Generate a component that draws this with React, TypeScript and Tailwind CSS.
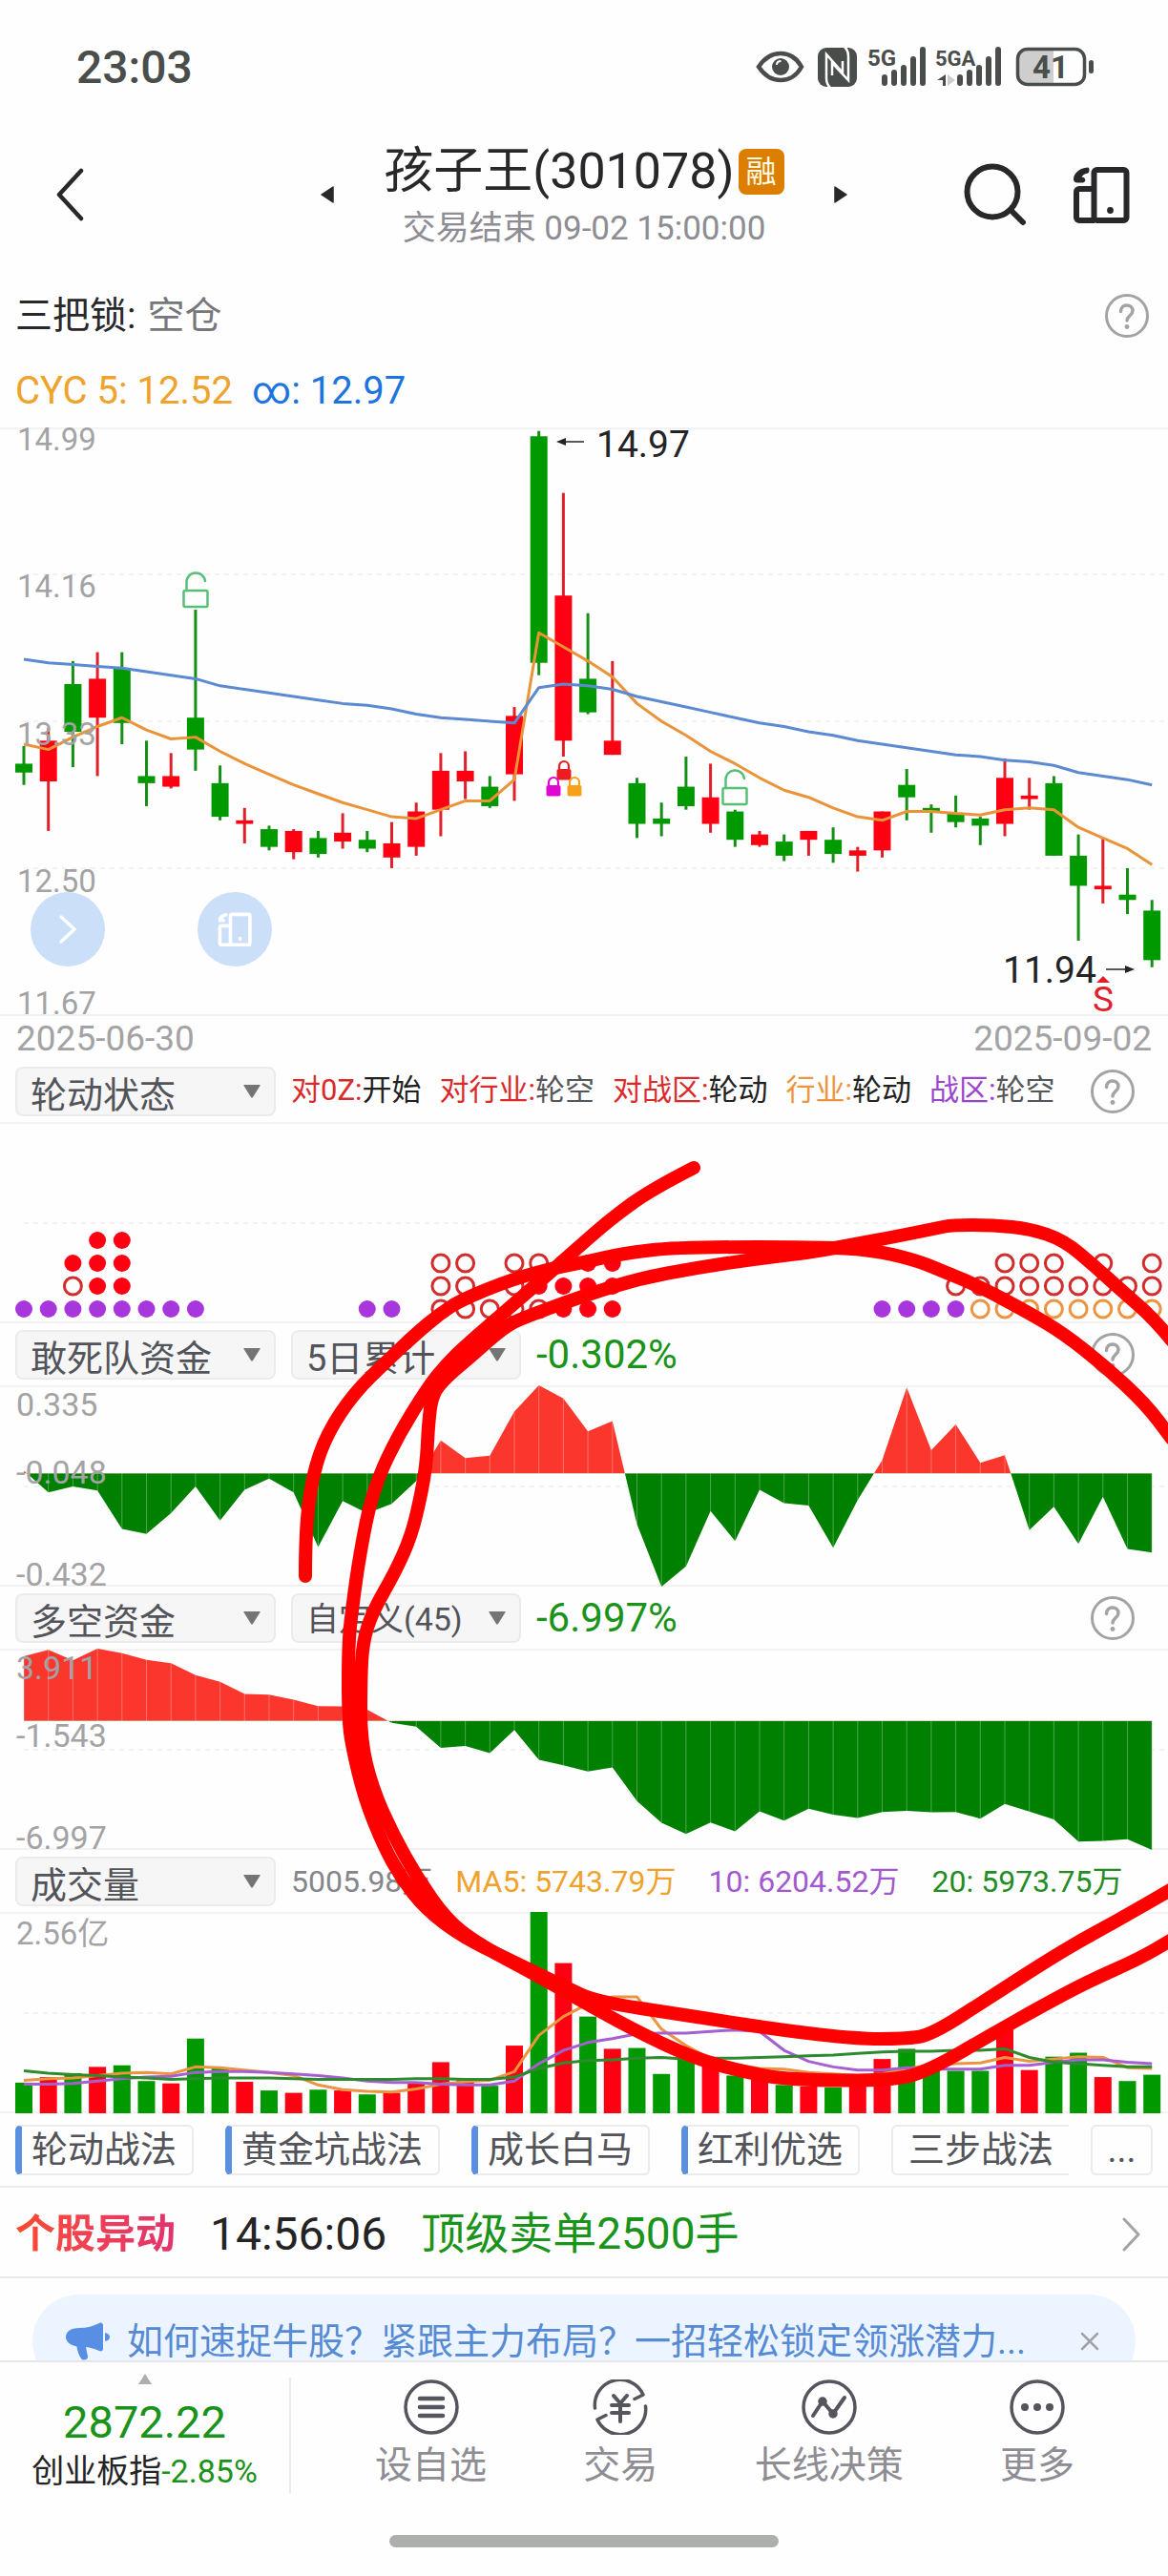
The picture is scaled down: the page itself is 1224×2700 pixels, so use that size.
import type { ReactNode } from "react";

type Point = [number, number];
type Candle = ["up" | "down", number, number, number, number];

const UP = "#ff0012";
const DOWN = "#009a00";
const WIDTH = 1224;
const PANEL_HEIGHT = 211;

// [direction, high, body top, body bottom, low]
const candles: Candle[] = [
  ["down", 13.19, 13.09, 13.04, 12.97],
  ["up", 13.29, 13.22, 12.99, 12.71],
  ["down", 13.67, 13.54, 13.27, 13.07],
  ["up", 13.72, 13.57, 13.35, 13.02],
  ["down", 13.72, 13.63, 13.32, 13.2],
  ["down", 13.22, 13.02, 12.98, 12.85],
  ["up", 13.15, 13.02, 12.96, 12.95],
  ["down", 13.96, 13.35, 13.17, 13.05],
  ["down", 13.08, 12.98, 12.79, 12.77],
  ["up", 12.84, 12.77, 12.75, 12.64],
  ["down", 12.74, 12.72, 12.62, 12.6],
  ["up", 12.72, 12.71, 12.59, 12.55],
  ["down", 12.71, 12.67, 12.58, 12.56],
  ["up", 12.81, 12.7, 12.65, 12.61],
  ["down", 12.71, 12.66, 12.61, 12.59],
  ["up", 12.76, 12.64, 12.56, 12.5],
  ["up", 12.87, 12.82, 12.62, 12.57],
  ["up", 13.15, 13.05, 12.83, 12.68],
  ["up", 13.16, 13.05, 12.99, 12.89],
  ["down", 13.02, 12.96, 12.85, 12.84],
  ["up", 13.41, 13.36, 13.03, 12.88],
  ["down", 14.97, 14.94, 13.66, 13.59],
  ["up", 14.62, 14.04, 13.22, 13.13],
  ["down", 13.94, 13.57, 13.38, 13.37],
  ["up", 13.67, 13.22, 13.14, 13.14],
  ["down", 13.01, 12.98, 12.75, 12.67],
  ["down", 12.87, 12.78, 12.75, 12.68],
  ["down", 13.13, 12.96, 12.85, 12.83],
  ["up", 13.09, 12.9, 12.75, 12.7],
  ["down", 12.83, 12.82, 12.66, 12.62],
  ["up", 12.71, 12.69, 12.63, 12.62],
  ["down", 12.69, 12.65, 12.57, 12.54],
  ["up", 12.71, 12.71, 12.66, 12.57],
  ["down", 12.73, 12.66, 12.58, 12.53],
  ["up", 12.62, 12.6, 12.57, 12.48],
  ["up", 12.82, 12.82, 12.6, 12.56],
  ["down", 13.06, 12.97, 12.9, 12.77],
  ["down", 12.86, 12.84, 12.82, 12.7],
  ["down", 12.91, 12.81, 12.76, 12.73],
  ["down", 12.79, 12.78, 12.74, 12.63],
  ["up", 13.12, 13.01, 12.75, 12.68],
  ["up", 13.01, 12.91, 12.89, 12.83],
  ["down", 13.02, 12.98, 12.57, 12.57],
  ["down", 12.69, 12.57, 12.4, 12.09],
  ["up", 12.67, 12.4, 12.38, 12.3],
  ["down", 12.5, 12.35, 12.32, 12.24],
  ["down", 12.32, 12.26, 11.98, 11.94],
];

const cyc5 = [
  13.2, 13.17, 13.24, 13.3, 13.35, 13.28, 13.23, 13.24, 13.16, 13.09, 13.03, 12.97, 12.92, 12.87, 12.83, 12.79,
  12.78, 12.83, 12.88, 12.88, 13, 13.83, 13.75, 13.67, 13.58, 13.43, 13.33, 13.25, 13.16, 13.09, 13.01, 12.94,
  12.9, 12.84, 12.79, 12.77, 12.82, 12.82, 12.81, 12.8, 12.83, 12.84, 12.83, 12.73, 12.67, 12.61, 12.52,
];

const cycAll = [
  13.68, 13.66, 13.65, 13.64, 13.63, 13.61, 13.59, 13.57, 13.53, 13.51, 13.49, 13.47, 13.45, 13.43, 13.42, 13.4,
  13.37, 13.35, 13.34, 13.33, 13.32, 13.52, 13.54, 13.53, 13.51, 13.47, 13.44, 13.41, 13.38, 13.35, 13.32, 13.3,
  13.27, 13.25, 13.22, 13.2, 13.18, 13.16, 13.14, 13.13, 13.11, 13.1, 13.08, 13.04, 13.02, 13, 12.97,
];

const suicideSquad = [
  0.01, -0.073, -0.05, -0.066, -0.212, -0.231, -0.152, -0.05, -0.18, -0.063, -0.02, -0.073, -0.281, -0.106, -0.152,
  -0.117, -0.029, 0.125, 0.058, 0.067, 0.235, 0.335, 0.285, 0.16, 0.199, -0.194, -0.432, -0.355, -0.144, -0.258,
  -0.063, -0.114, -0.123, -0.284, -0.102, 0.05, 0.327, 0.088, 0.186, 0.04, 0.069, -0.217, -0.128, -0.269, -0.089,
  -0.288, -0.302,
];

const longShort = [
  3.5, 3.85, 3.28, 3.91, 3.67, 3.3, 3.12, 2.47, 2.11, 1.46, 1.42, 1.14, 0.8, 0.78, 0.6, -0.11, -0.31, -1.47, -1.36,
  -1.75, -0.5, -2.11, -2.41, -2.74, -2.52, -4.35, -5.53, -6.13, -5.51, -5.99, -4.9, -5.41, -4.76, -5.08, -5.26,
  -4.94, -4.88, -4.96, -4.94, -5.3, -4.5, -4.92, -5.34, -6.54, -6.5, -6.42, -6.997,
];

const volumes = [
  39, 46, 51, 59, 61, 41, 38, 95, 57, 40, 29, 26, 30, 29, 24, 26, 39, 65, 42, 35, 86, 256, 191, 123, 82, 83, 50, 68,
  62, 48, 46, 36, 34, 33, 36, 69, 82, 55, 54, 54, 109, 55, 72, 77, 46, 41, 49,
];

const ma5 = [
  42, 44, 45, 48, 51, 52, 50, 59, 58, 55, 52, 48, 36, 30, 28, 27, 31, 37, 40, 42, 53, 99, 123, 139, 148, 148, 107,
  86, 69, 62, 57, 56, 52, 50, 48, 50, 57, 61, 63, 64, 71, 66, 69, 72, 71, 58, 57,
];

const ma10 = [
  37, 37, 38, 41, 44, 46, 47, 52, 53, 53, 52, 50, 48, 45, 41, 39, 39, 37, 36, 36, 41, 63, 80, 90, 95, 101, 102, 102,
  104, 106, 104, 80, 66, 59, 55, 55, 58, 56, 56, 56, 61, 61, 65, 68, 68, 65, 63,
];

const ma20 = [
  54, 51, 49, 48, 46, 45, 43, 44, 45, 45, 45, 44, 43, 43, 43, 43, 44, 44, 43, 43, 46, 57, 64, 67, 68, 70, 71, 69, 70,
  70, 71, 72, 73, 74, 76, 78, 79, 79, 80, 80, 82, 71, 65, 63, 61, 59, 59,
];

const dotRows = [
  { y: 124, color: UP, solid: true, days: [3, 4] },
  { y: 148, color: UP, solid: true, days: [2, 3, 4, 22, 23, 24] },
  { y: 148, color: "#d32c2c", solid: false, days: [17, 18, 20, 21, 40, 41, 42, 44, 46] },
  { y: 172, color: UP, solid: true, days: [3, 4, 21, 22, 23, 24] },
  { y: 172, color: "#d32c2c", solid: false, days: [2, 17, 18, 20, 38, 39, 40, 41, 42, 43, 44, 45, 46] },
  { y: 196, color: "#a737dc", solid: true, days: [0, 1, 2, 3, 4, 5, 6, 7, 14, 15, 35, 36, 37, 38] },
  { y: 196, color: UP, solid: true, days: [22, 23, 24] },
  { y: 196, color: "#d32c2c", solid: false, days: [17, 18, 19, 20, 21] },
  { y: 196, color: "#ec9440", solid: false, days: [39, 40, 41, 42, 43, 44, 45, 46] },
];

const strokes: Point[][] = [
  [
    [727, 1224], [682, 1247], [641, 1277], [612, 1302], [566, 1343], [488, 1410], [468, 1430], [449, 1453],
    [414, 1510], [390, 1564], [377, 1629], [369, 1686], [365, 1724], [365, 1801], [369, 1831], [382, 1885],
    [402, 1935], [421, 1969], [445, 2000], [484, 2030], [546, 2060], [593, 2083], [625, 2098], [718, 2112],
    [749, 2117], [820, 2128], [898, 2137], [948, 2137], [976, 2133], [1038, 2093], [1116, 2043], [1171, 2013],
    [1228, 1980],
  ],
  [
    [320, 1652], [320, 1602], [328, 1544], [343, 1502], [371, 1460], [406, 1426], [437, 1397], [461, 1377],
    [484, 1362], [539, 1340], [585, 1328], [612, 1323], [651, 1314], [710, 1307], [877, 1307], [924, 1312],
    [963, 1322], [987, 1332], [1026, 1348], [1080, 1377], [1115, 1398], [1158, 1432], [1201, 1472], [1228, 1508],
  ],
  [
    [1228, 1405], [1209, 1382], [1178, 1355], [1147, 1327], [1115, 1300], [1080, 1288], [1041, 1284], [998, 1284],
    [983, 1287], [944, 1295], [881, 1307], [846, 1313], [788, 1320], [729, 1329], [670, 1340], [612, 1358],
    [546, 1382], [527, 1392], [492, 1423], [468, 1443], [453, 1461], [449, 1491], [447, 1533], [441, 1568],
    [431, 1610], [414, 1648], [390, 1690], [380, 1722], [378, 1763], [378, 1824], [390, 1874], [412, 1923],
    [437, 1968], [468, 2012], [500, 2037], [562, 2070], [609, 2097], [663, 2127], [726, 2157], [781, 2172],
    [827, 2180], [937, 2181], [976, 2169], [1038, 2133], [1093, 2102], [1140, 2077], [1194, 2053], [1228, 2033],
  ],
];

const strategies = ["轮动战法", "黄金坑战法", "成长白马", "红利优选"];

const dayX = (i: number) => 25 + i * 25.7;
const priceY = (price: number) => (14.99 - price) * 185.5;
const volumeY = (volume: number) => PANEL_HEIGHT - (volume / 256) * PANEL_HEIGHT;

const toLine = (values: number[], scale: (v: number) => number) =>
  values.map((v, i) => `${dayX(i)},${scale(v)}`).join(" ");

const toCurve = (points: Point[]) => {
  let d = `M${points[0][0]} ${points[0][1]}`;
  for (let i = 1; i < points.length - 1; i++) {
    const [x, y] = points[i];
    const [nx, ny] = points[i + 1];
    d += ` Q${x} ${y} ${(x + nx) / 2} ${(y + ny) / 2}`;
  }
  const last = points[points.length - 1];
  return `${d} L${last[0]} ${last[1]}`;
};

const HelpButton = () => (
  <button type="button" aria-label="说明" className="shrink-0 text-[#a3a3a6]">
    <svg viewBox="0 0 46 46" className="size-[46px]" fill="none" stroke="currentColor" strokeLinecap="round">
      <circle cx="23" cy="23" r="21.5" strokeWidth="3" />
      <path d="M16.5 18.5c0-4 2.800-6.500 6.300-6.500s6.200 2.400 6.200 5.800c0 4.700-6 5.200-6 10.200" strokeWidth="3.500" />
      <circle cx="23" cy="34.500" r="2.400" fill="currentColor" stroke="none" />
    </svg>
  </button>
);

const DevicesIcon = ({ className }: { className: string }) => (
  <svg viewBox="0 0 60 60" className={className} fill="none" stroke="currentColor" strokeWidth="6" strokeLinejoin="round">
    <rect x="22.500" y="4" width="34" height="53" rx="3" />
    <path d="M22 24H7a3 3 0 0 0-3 3v27a3 3 0 0 0 3 3h16" />
    <circle cx="39.500" cy="46.500" r="3.400" fill="currentColor" stroke="none" />
    <path
      d="M16 1.500C7 2 1 8 1 14c0 2 1.500 3.500 4 3.500h5c2.500 0 4-2 3-4-.5-1.200-1.800-1.800-3.500-2 1-2 3-3.200 6-3.800 1.500-.4 2-2 2-3.500s-.5-2.700-1.500-2.700z"
      fill="currentColor"
      stroke="none"
    />
  </svg>
);

const OpenLock = ({ x, y }: { x: number; y: number }) => (
  <g transform={`translate(${x} ${y})`} fill="none" stroke="#58bf78" strokeWidth="2.500" strokeLinecap="round">
    <rect x="-12.500" y="19" width="25" height="17" rx="1.500" />
    <path d="M-9.500 19v-7.500a9.800 9.800 0 0 1 19.500-2.500" />
  </g>
);

const ClosedLock = ({ x, y, color }: { x: number; y: number; color: string }) => (
  <g transform={`translate(${x} ${y})`}>
    <path d="M-5 9V6a5 5 0 0 1 10 0v3" fill="none" stroke={color} strokeWidth="2.200" />
    <rect x="-7.500" y="9" width="15" height="11.500" rx="2" fill={color} />
  </g>
);

const StatusBar = () => (
  <div className="flex h-[142px] items-center justify-between pr-[76px] pl-20 text-[#4a4e4b]">
    <span className="text-[48px] font-medium">23:03</span>
    <svg viewBox="0 0 356 44" className="h-11 w-[356px] overflow-visible" fill="none" aria-hidden="true">
      <path d="M3 21C9 12 17 7 26 7s17 5 22 14c-5 9-13 14-22 14S9 30 3 21z" stroke="#4a4e4b" strokeWidth="4.500" />
      <circle cx="26" cy="21" r="9" fill="#4a4e4b" />
      <path d="M22 19c0-2.500 2-4 4.500-4" stroke="#fff" strokeWidth="2" />
      <rect x="65" y="1" width="41" height="41" rx="9" fill="#4a4e4b" />
      <path d="M78 43q-4-4-4-10V8l17 19V15" stroke="#fff" strokeWidth="2.500" />
      <path d="M93 0q4 4 4 10v25L80 17v13" stroke="#fff" strokeWidth="2.500" />
      <g fontFamily="Roboto, sans-serif" fontWeight="700" fill="#4a4e4b" fontSize="24">
        <text x="117" y="20">5G</text>
        <text x="188" y="20" fontSize="22">5GA</text>
      </g>
      <g stroke="#4a4e4b" strokeWidth="6" strokeLinecap="round">
        <path d="M135 32v6M145 27v11M155 22v16M165 13v25M175 3v35" />
        <path d="M214 32v6M224 27v11M234 22v16M244 13v25M254 3v35" />
      </g>
      <path d="M199 29v12h-3v-6h-6z" fill="#4a4e4b" />
      <path d="M201 29v12l8-6z" fill="#cfcbce" />
      <path d="M284 3h28v36h-28a8 8 0 0 1-8-8V11a8 8 0 0 1 8-8z" fill="#cecece" />
      <rect x="274.500" y="2.500" width="70" height="37" rx="10" stroke="#4a4e4b" strokeWidth="3.500" />
      <rect x="349" y="14" width="5" height="14" rx="2.500" fill="#4a4e4b" />
      <text x="309" y="33" textAnchor="middle" fontFamily="Roboto, sans-serif" fontWeight="700" fontSize="33" fill="#4a4e4b">
        41
      </text>
    </svg>
  </div>
);

const Header = () => (
  <header className="mb-7 grid h-[124px] grid-cols-[1fr_auto_1fr] items-center text-[#28282a]">
    <button type="button" aria-label="返回" className="w-fit pl-[58px]">
      <svg viewBox="0 0 30 56" className="h-14 w-[30px]" fill="none" stroke="currentColor" strokeWidth="4.500" strokeLinecap="round" strokeLinejoin="round">
        <path d="M27 3 4 28l23 25" />
      </svg>
    </button>
    <div className="flex w-[552px] items-center justify-between">
      <button type="button" aria-label="上一只">
        <svg viewBox="0 0 14 18" className="h-[18px] w-3.5" fill="currentColor">
          <path d="M13 1v16L1 9z" stroke="currentColor" strokeWidth="1.500" strokeLinejoin="round" />
        </svg>
      </button>
      <div className="pt-1 text-center">
        <h1 className="flex items-center gap-1 text-[52px] leading-14">
          孩子王(301078)
          <span className="flex size-12 items-center justify-center rounded-lg bg-[#dc7f00] text-[32px] text-[#fffbe6]">融</span>
        </h1>
        <p className="mt-3 text-[35px] leading-10 text-[#8d8d93]">交易结束 09-02 15:00:00</p>
      </div>
      <button type="button" aria-label="下一只">
        <svg viewBox="0 0 14 18" className="h-[18px] w-3.5" fill="currentColor">
          <path d="M1 1v16l12-8z" stroke="currentColor" strokeWidth="1.500" strokeLinejoin="round" />
        </svg>
      </button>
    </div>
    <div className="flex items-center justify-end gap-12 pr-10">
      <button type="button" aria-label="搜索">
        <svg viewBox="0 0 66 66" className="size-[66px]" fill="none" stroke="currentColor" strokeWidth="6" strokeLinecap="round">
          <circle cx="30" cy="30" r="26.500" />
          <path d="m50 50 12 12" />
        </svg>
      </button>
      <button type="button" aria-label="多屏">
        <DevicesIcon className="size-[60px]" />
      </button>
    </div>
  </header>
);

const PriceChart = () => (
  <section className="relative">
    <svg viewBox={`0 0 ${WIDTH} 617`} className="block h-auto w-full overflow-visible" fontFamily="Roboto, sans-serif">
      <path d={`M0 1H${WIDTH}M0 616H${WIDTH}`} stroke="#f2f2f3" strokeWidth="2" />
      <path d="M25 154H1220M25 308H1220M25 462H1220" stroke="#f3f3f4" strokeWidth="2" strokeDasharray="5 5" />
      {candles.map(([dir, high, top, bottom, low], i) => (
        <g key={i} fill={dir === "up" ? UP : DOWN}>
          <rect x={dayX(i) - 1.5} y={priceY(high)} width="3" height={priceY(low) - priceY(high)} fill={dir === "up" ? "#e0202a" : "#149014"} />
          <rect x={dayX(i) - 9} y={priceY(top)} width="18" height={Math.max(priceY(bottom) - priceY(top), 3)} />
        </g>
      ))}
      <g fill="none" strokeWidth="3" strokeLinejoin="round">
        <polyline points={toLine(cyc5, priceY)} stroke="#ea9338" />
        <polyline points={toLine(cycAll, priceY)} stroke="#5b8ad2" />
      </g>
      <OpenLock x={205} y={152} />
      <OpenLock x={770} y={359} />
      <ClosedLock x={591} y={349} color="#ea1c24" />
      <ClosedLock x={580} y={366} color="#de08d2" />
      <ClosedLock x={602} y={366} color="#f8a01c" />
      <g fontSize="33" fill="#a3a3a5">
        <text x="18" y="24">14.99</text>
        <text x="18" y="178">14.16</text>
        <text x="18" y="333">13.33</text>
        <text x="18" y="487">12.50</text>
        <text x="18" y="615">11.67</text>
      </g>
      <g fontSize="39" fill="#242426">
        <text x="625" y="31">14.97</text>
        <text x="1051" y="582">11.94</text>
      </g>
      <g stroke="#242426" fill="#242426">
        <path d="M590 15h22M1159 568h22" strokeWidth="1.500" />
        <path d="m583 15 10-4v8zM1189 568l-10-4v8z" stroke="none" />
      </g>
      <path d="m1156 575 7 7h-14z" fill="#e0202a" />
      <text x="1156" y="612" textAnchor="middle" fontSize="37" fill="#e0202a">S</text>
    </svg>
    <div className="absolute bottom-[52px] left-8 flex gap-[97px]">
      <button type="button" aria-label="展开" className="flex size-[78px] items-center justify-center rounded-full bg-[#cbdff9] text-white">
        <svg viewBox="0 0 20 32" className="h-8 w-5" fill="none" stroke="currentColor" strokeWidth="3.500" strokeLinecap="round" strokeLinejoin="round">
          <path d="m3 3 14 13L3 29" />
        </svg>
      </button>
      <button type="button" aria-label="横屏" className="flex size-[78px] items-center justify-center rounded-full bg-[#cbdff9] text-white">
        <DevicesIcon className="size-9" />
      </button>
    </div>
  </section>
);

interface PickerProps {
  label: string;
  value: string;
  className: string;
}

const Picker = ({ label, value, className }: PickerProps) => (
  <div className="relative flex shrink-0">
    <select
      aria-label={label}
      defaultValue={value}
      className={`h-[52px] appearance-none rounded-lg border-2 border-[#ebebec] bg-[#f6f6f6] pb-0.5 text-[#53545a] ${className}`}
    >
      <option>{value}</option>
    </select>
    <svg viewBox="0 0 18 14" className="pointer-events-none absolute top-[19px] right-4 h-3.5 w-[18px]" fill="#737674" aria-hidden="true">
      <path d="M1 0h16q1 0 .5 1L10 13q-1 1-2 0L.5 1Q0 0 1 0z" />
    </svg>
  </div>
);

interface PanelProps {
  title: string;
  period?: ReactNode;
  legend: ReactNode;
  help?: boolean;
  children: ReactNode;
}

const Panel = ({ title, period, legend, help = true, children }: PanelProps) => (
  <section>
    <div className="flex h-[65px] items-center pr-[35px] pl-4">
      <Picker label="指标" value={title} className="w-[273px] pl-3.5 text-[38px]" />
      {period && <div className="ml-4">{period}</div>}
      <div className="ml-4 flex-1 whitespace-nowrap">{legend}</div>
      {help && <HelpButton />}
    </div>
    <svg
      viewBox={`0 0 ${WIDTH} ${PANEL_HEIGHT}`}
      className="block h-auto w-full overflow-visible"
      fontFamily="Roboto, 'Noto Sans CJK SC', sans-serif"
    >
      <path d={`M0 1H${WIDTH}M0 ${PANEL_HEIGHT - 1}H${WIDTH}`} stroke="#f2f2f3" strokeWidth="2" />
      <path d="M25 106H1220" stroke="#f3f3f4" strokeWidth="2" strokeDasharray="5 5" />
      {children}
    </svg>
  </section>
);

const AxisLabels = ({ labels }: { labels: string[] }) => {
  const tops = [32, 103, 210];
  return (
    <g fontSize="34" fill="#a3a3a5">
      {labels.map((label, i) => (
        <text key={label} x="17" y={tops[i]}>{label}</text>
      ))}
    </g>
  );
};

interface AreaProps {
  id: string;
  values: number[];
  max: number;
  min: number;
}

const Area = ({ id, values, max, min }: AreaProps) => {
  const scale = (v: number) => ((max - v) / (max - min)) * PANEL_HEIGHT;
  const zero = scale(0);
  const points = `${dayX(0)},${zero} ${toLine(values, scale)} ${dayX(values.length - 1)},${zero}`;
  return (
    <>
      <clipPath id={`${id}-above`}>
        <rect width={WIDTH} height={zero} />
      </clipPath>
      <clipPath id={`${id}-below`}>
        <rect y={zero} width={WIDTH} height={PANEL_HEIGHT - zero} />
      </clipPath>
      <polygon points={points} fill="#fb372d" clipPath={`url(#${id}-above)`} />
      <polygon points={points} fill="#008000" clipPath={`url(#${id}-below)`} />
      {values.map((v, i) => (
        <path key={i} d={`M${dayX(i)} ${zero}V${scale(v)}`} stroke="#fff" strokeOpacity="0.3" />
      ))}
    </>
  );
};

const RotationLegend = () => {
  const items = [
    { name: "对0Z", value: "开始", nameClass: "text-[#d92b2b]", valueClass: "text-[#222]" },
    { name: "对行业", value: "轮空", nameClass: "text-[#d92b2b]", valueClass: "text-[#55565a]" },
    { name: "对战区", value: "轮动", nameClass: "text-[#d92b2b]", valueClass: "text-[#222]" },
    { name: "行业", value: "轮动", nameClass: "text-[#ec9440]", valueClass: "text-[#222]" },
    { name: "战区", value: "轮空", nameClass: "text-[#9b45cf]", valueClass: "text-[#55565a]" },
  ];
  return (
    <div className="flex gap-[19px] text-[31px]">
      {items.map((item) => (
        <span key={item.name} className={item.nameClass}>
          {item.name}:<span className={item.valueClass}>{item.value}</span>
        </span>
      ))}
    </div>
  );
};

const IndicatorPanels = () => (
  <div className="relative">
    <Panel title="轮动状态" legend={<RotationLegend />}>
      {dotRows.map((row, r) =>
        row.days.map((day) => (
          <circle
            key={`${r}-${day}`}
            cx={dayX(day)}
            cy={row.y}
            r="9"
            fill={row.solid ? row.color : "none"}
            stroke={row.solid ? "none" : row.color}
            strokeWidth="3"
          />
        ))
      )}
    </Panel>
    <Panel
      title="敢死队资金"
      period={<Picker label="周期" value="5日累计" className="w-[241px] pl-3.5 text-[38px]" />}
      legend={<span className="text-[42px] text-[#1a931a]">-0.302%</span>}
    >
      <Area id="squad" values={suicideSquad} max={0.335} min={-0.432} />
      <AxisLabels labels={["0.335", "-0.048", "-0.432"]} />
    </Panel>
    <Panel
      title="多空资金"
      period={<Picker label="周期" value="自定义(45)" className="w-[241px] pl-3.5 text-[34px]" />}
      legend={<span className="text-[42px] text-[#1a931a]">-6.997%</span>}
    >
      <Area id="longshort" values={longShort} max={3.911} min={-6.997} />
      <AxisLabels labels={["3.911", "-1.543", "-6.997"]} />
    </Panel>
    <Panel
      title="成交量"
      help={false}
      legend={
        <div className="flex gap-[34px] text-[32px]">
          <span className="-mr-2.5 text-[#85868a]">5005.98万</span>
          <span className="text-[#efa22c]">MA5: 5743.79万</span>
          <span className="text-[#a259cf]">10: 6204.52万</span>
          <span className="text-[#238c23]">20: 5973.75万</span>
        </div>
      }
    >
      {volumes.map((volume, i) => (
        <rect
          key={i}
          x={dayX(i) - 9}
          y={volumeY(volume)}
          width="18"
          height={PANEL_HEIGHT - volumeY(volume)}
          fill={candles[i][0] === "up" ? UP : DOWN}
        />
      ))}
      <g fill="none" strokeWidth="3" strokeLinejoin="round">
        <polyline points={toLine(ma5, volumeY)} stroke="#ec9440" />
        <polyline points={toLine(ma10, volumeY)} stroke="#a55fd0" />
        <polyline points={toLine(ma20, volumeY)} stroke="#2c8b2c" />
      </g>
      <text x="17" y="34" fontSize="33" fill="#a3a3a5">2.56亿</text>
    </Panel>
    {/* hand-drawn marker strokes, laid over all four panels */}
    <svg viewBox="0 1111 1224 1104" className="pointer-events-none absolute top-0 left-0 h-auto w-full" fill="none" aria-hidden="true">
      {strokes.map((stroke, i) => (
        <path key={i} d={toCurve(stroke)} stroke="#ff0000" strokeWidth="14" strokeLinecap="round" strokeLinejoin="round" />
      ))}
    </svg>
  </div>
);

const StrategyBar = () => (
  <div className="flex h-[78px] items-center gap-[33px] border-b-2 border-[#e9e9ea] px-4 text-[38px] text-[#53545a]">
    {strategies.map((name) => (
      <button
        key={name}
        type="button"
        className="h-[53px] shrink-0 rounded-md border-2 border-l-[7px] border-[#ebebec] border-l-[#5b8fdf] pr-4 pl-2.5 leading-[48px]"
      >
        {name}
      </button>
    ))}
    <button type="button" className="h-[53px] shrink-0 rounded-l-md border-2 border-r-0 border-[#ebebec] px-4 leading-[48px]">
      三步战法
    </button>
    <button type="button" aria-label="更多战法" className="-ml-2.5 h-[53px] w-[65px] shrink-0 rounded-md border-2 border-[#ebebec] text-center leading-[48px]">
      ...
    </button>
  </div>
);

const StockAlert = () => (
  <a href="#alerts" className="flex h-[95px] items-center border-b-2 border-[#e9e9ea] pt-1 pr-7 pl-4 text-[46px]">
    <span className="bg-linear-to-r from-[#fb4a2c] to-[#e2336f] bg-clip-text text-[42px] font-bold text-transparent">个股异动</span>
    <span className="ml-9 text-[48px] text-[#242426]">14:56:06</span>
    <span className="ml-9 flex-1 text-[#1a931a]">顶级卖单2500手</span>
    <svg viewBox="0 0 20 36" className="h-9 w-5" fill="none" stroke="#a3a3a5" strokeWidth="3" strokeLinecap="round" strokeLinejoin="round">
      <path d="m2 2 15 16L2 34" />
    </svg>
  </a>
);

const Notice = () => (
  <div className="h-[86px] overflow-hidden px-[34px] pt-[17px]">
    <div className="flex h-[98px] items-center rounded-full bg-[#ecf5ff] pr-[38px] pl-[35px]">
      <svg viewBox="0 0 46 40" className="h-10 w-[46px] shrink-0" fill="#588fe4" aria-hidden="true">
        <path d="M14 6c8 0 15-2 21-5 2-1 4 0 4 2v25c0 2-2 3-4 2-5-2-9-3.500-14-4l2 10c.5 3-5 5-7 2-2.500-3.500-4-8-4.500-12.500C4.500 24 0 20.500 0 15.500 0 10 5 6 14 6z" />
        <path d="M41 11q5 1 5 4.500T41 20z" />
      </svg>
      <a href="#notice" className="ml-[18px] flex-1 text-[38px] leading-10 whitespace-nowrap text-[#568ad4]">
        如何速捉牛股？紧跟主力布局？一招轻松锁定领涨潜力...
      </a>
      <button type="button" aria-label="关闭">
        <svg viewBox="0 0 20 20" className="size-5" stroke="#a3a3a5" strokeWidth="2.500" strokeLinecap="round">
          <path d="m2 2 16 16M18 2 2 18" />
        </svg>
      </button>
    </div>
  </div>
);

const navItems = [
  {
    label: "设自选",
    icon: (
      <>
        <circle cx="29" cy="29" r="27" />
        <path d="M17 20h24M17 29h24M17 38h24" strokeWidth="4.500" />
      </>
    ),
  },
  {
    label: "交易",
    icon: (
      <>
        <path d="M2.500 30A26.500 26.500 0 0 1 53 16l-9 4.500" />
        <path d="M55.500 28A26.500 26.500 0 0 1 5 42l9-4.500" />
        <path d="m22 17 7 8 7-8M29 25v19M20 27h18M20 35h18" strokeWidth="4" />
      </>
    ),
  },
  {
    label: "长线决策",
    icon: (
      <>
        <circle cx="29" cy="29" r="27" />
        <path d="m12 38 10-15 11 13 12-17" strokeWidth="4" />
        <circle cx="22" cy="23" r="3" fill="currentColor" />
        <circle cx="33" cy="36" r="3" fill="currentColor" />
      </>
    ),
  },
  {
    label: "更多",
    icon: (
      <>
        <circle cx="29" cy="29" r="27" />
        <g fill="currentColor" stroke="none">
          <circle cx="16" cy="29" r="4" />
          <circle cx="29" cy="29" r="4" />
          <circle cx="42" cy="29" r="4" />
        </g>
      </>
    ),
  },
];

const BottomNav = () => (
  <nav className="border-t-2 border-[#e6e6e7]">
    <div className="flex pt-4">
      <a href="#index" className="flex h-[121px] w-[305px] shrink-0 flex-col items-center border-r-2 border-[#ebebec] text-[#1a931a]">
        <svg viewBox="0 0 14 11" className="-mt-1 h-[11px] w-3.5" fill="#adafad" aria-hidden="true">
          <path d="M7 0l7 11H0z" />
        </svg>
        <span className="mt-3.5 text-[47px] leading-[52px]">2872.22</span>
        <span className="mt-1 text-[34px] leading-[42px]">
          <span className="text-[#242426]">创业板指</span>-2.85%
        </span>
      </a>
      <ul className="flex flex-1 justify-between pr-[98px] pl-[88px]">
        {navItems.map((item) => (
          <li key={item.label}>
            <button type="button" className="flex flex-col items-center text-[#55555d]">
              <svg viewBox="0 0 58 58" className="mt-0.5 size-[58px]" fill="none" stroke="currentColor" strokeWidth="3.500" strokeLinecap="round" strokeLinejoin="round">
                {item.icon}
              </svg>
              <span className="mt-2 text-[39px] leading-12 text-[#8d8d93]">{item.label}</span>
            </button>
          </li>
        ))}
      </ul>
    </div>
    <div className="flex justify-center pt-11 pb-[30px]">
      <div className="h-[13px] w-1/3 rounded-full bg-[#adafad]" />
    </div>
  </nav>
);

export default function App() {
  return (
    <div className="min-h-screen w-full overflow-hidden bg-[#fefefe] font-[Roboto,'Noto_Sans_CJK_SC',sans-serif]">
      <StatusBar />
      <Header />
      <main>
        <div className="flex h-[74px] items-center justify-between pr-5 pl-4 text-[39px] text-[#28282a]">
          <p className="flex gap-3">
            三把锁: <span className="text-[#77777b]">空仓</span>
          </p>
          <HelpButton />
        </div>
        <div className="flex h-20 items-center gap-5 pt-1 pl-4 text-[40px]">
          <span className="text-[#efa22c]">CYC 5: 12.52</span>
          <span className="text-[#1c74e0]">∞: 12.97</span>
        </div>
        <PriceChart />
        <div className="flex h-[46px] items-center justify-between px-[17px] pt-0.5 text-[37px] text-[#a3a3a5]">
          <time>2025-06-30</time>
          <time>2025-09-02</time>
        </div>
        <IndicatorPanels />
        <StrategyBar />
        <StockAlert />
        <Notice />
      </main>
      <BottomNav />
    </div>
  );
}
